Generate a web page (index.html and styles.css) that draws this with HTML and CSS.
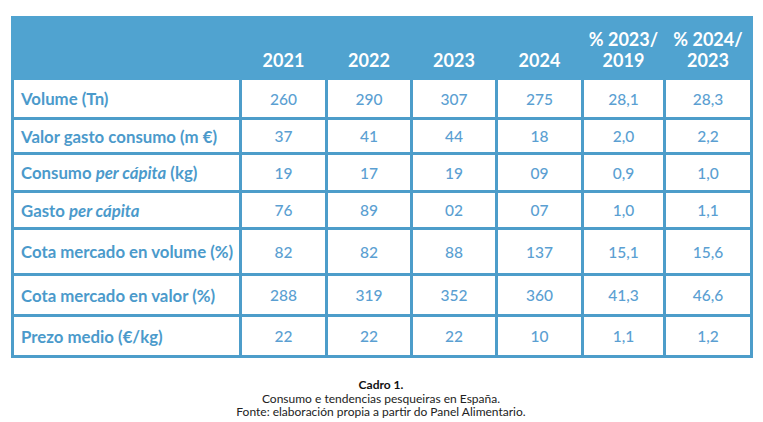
FILE: index.html
```html
<!DOCTYPE html>
<html lang="gl">
<head>
<meta charset="utf-8">
<title>Cadro 1</title>
<link rel="stylesheet" href="styles.css">
</head>
<body>
<figure class="figure">
  <table class="data">
    <colgroup>
      <col class="c-label">
      <col class="c-a">
      <col class="c-b">
      <col class="c-b">
      <col class="c-a">
      <col class="c-pct">
      <col class="c-pct2">
    </colgroup>
    <thead>
      <tr class="r-head">
        <th></th>
        <th>2021</th>
        <th>2022</th>
        <th>2023</th>
        <th>2024</th>
        <th>% 2023/<br>2019</th>
        <th>% 2024/<br>2023</th>
      </tr>
    </thead>
    <tbody>
      <tr class="r1"><td class="lbl">Volume (Tn)</td><td>260</td><td>290</td><td>307</td><td>275</td><td>28,1</td><td>28,3</td></tr>
      <tr class="r2"><td class="lbl">Valor gasto consumo (m €)</td><td>37</td><td>41</td><td>44</td><td>18</td><td>2,0</td><td>2,2</td></tr>
      <tr class="r3"><td class="lbl">Consumo <em>per cápita</em> (kg)</td><td>19</td><td>17</td><td>19</td><td>09</td><td>0,9</td><td>1,0</td></tr>
      <tr class="r4"><td class="lbl">Gasto <em>per cápita</em></td><td>76</td><td>89</td><td>02</td><td>07</td><td>1,0</td><td>1,1</td></tr>
      <tr class="r5"><td class="lbl">Cota mercado en volume (%)</td><td>82</td><td>82</td><td>88</td><td>137</td><td>15,1</td><td>15,6</td></tr>
      <tr class="r6"><td class="lbl">Cota mercado en valor (%)</td><td>288</td><td>319</td><td>352</td><td>360</td><td>41,3</td><td>46,6</td></tr>
      <tr class="r7"><td class="lbl">Prezo medio (€/kg)</td><td>22</td><td>22</td><td>22</td><td>10</td><td>1,1</td><td>1,2</td></tr>
    </tbody>
  </table>
  <figcaption class="caption">
    <strong class="cap-title">Cadro 1.</strong>
    <span class="cap-line">Consumo e tendencias pesqueiras en España.</span>
    <span class="cap-line">Fonte: elaboración propia a partir do Panel Alimentario.</span>
  </figcaption>
</figure>
</body>
</html>
```

FILE: styles.css
```css
html, body {
  margin: 0;
  padding: 0;
  background: #ffffff;
}

body {
  font-family: Lato, "Noto Sans", "Liberation Sans", sans-serif;
}

.figure {
  margin: 0;
  padding: 16px 0 0 11px;
  width: 740px;
}

.data {
  border-collapse: collapse;
  table-layout: fixed;
  width: 739px;
}

.c-label { width: 228px; }
.c-a { width: 86px; }
.c-b { width: 85px; }
.c-pct { width: 82px; }
.c-pct2 { width: 87px; }

.data th {
  background: #50a3d0;
  color: #ffffff;
  font-weight: 700;
  font-size: 18px;
  line-height: 21px;
  vertical-align: bottom;
  text-align: center;
  padding: 0 0 6px 0;
  border: 3px solid #50a3d0;
}

.r-head { height: 61px; }

.data td {
  border: 3px solid #4d9dca;
  color: #5b9fd2;
  font-size: 15.5px;
  font-weight: 500;
  text-align: center;
  vertical-align: middle;
  padding: 0;
}

.data td.lbl {
  text-align: left;
  padding-left: 7px;
  color: #4b9acb;
  font-weight: 700;
  font-size: 16.8px;
  white-space: nowrap;
}

.lbl em {
  font-style: italic;
}

.r1 { height: 40px; }
.r2 { height: 35px; }
.r3 { height: 38px; }
.r4 { height: 37px; }
.r5 { height: 46px; }
.r6 { height: 41px; }
.r7 { height: 41px; }

.caption {
  display: flex;
  flex-direction: column;
  align-items: center;
  margin-top: 20px;
  font-size: 12px;
  line-height: 13.5px;
  color: #222222;
}

.cap-title {
  font-weight: 700;
  color: #111111;
}

.cap-line {
  font-weight: 400;
}
```
